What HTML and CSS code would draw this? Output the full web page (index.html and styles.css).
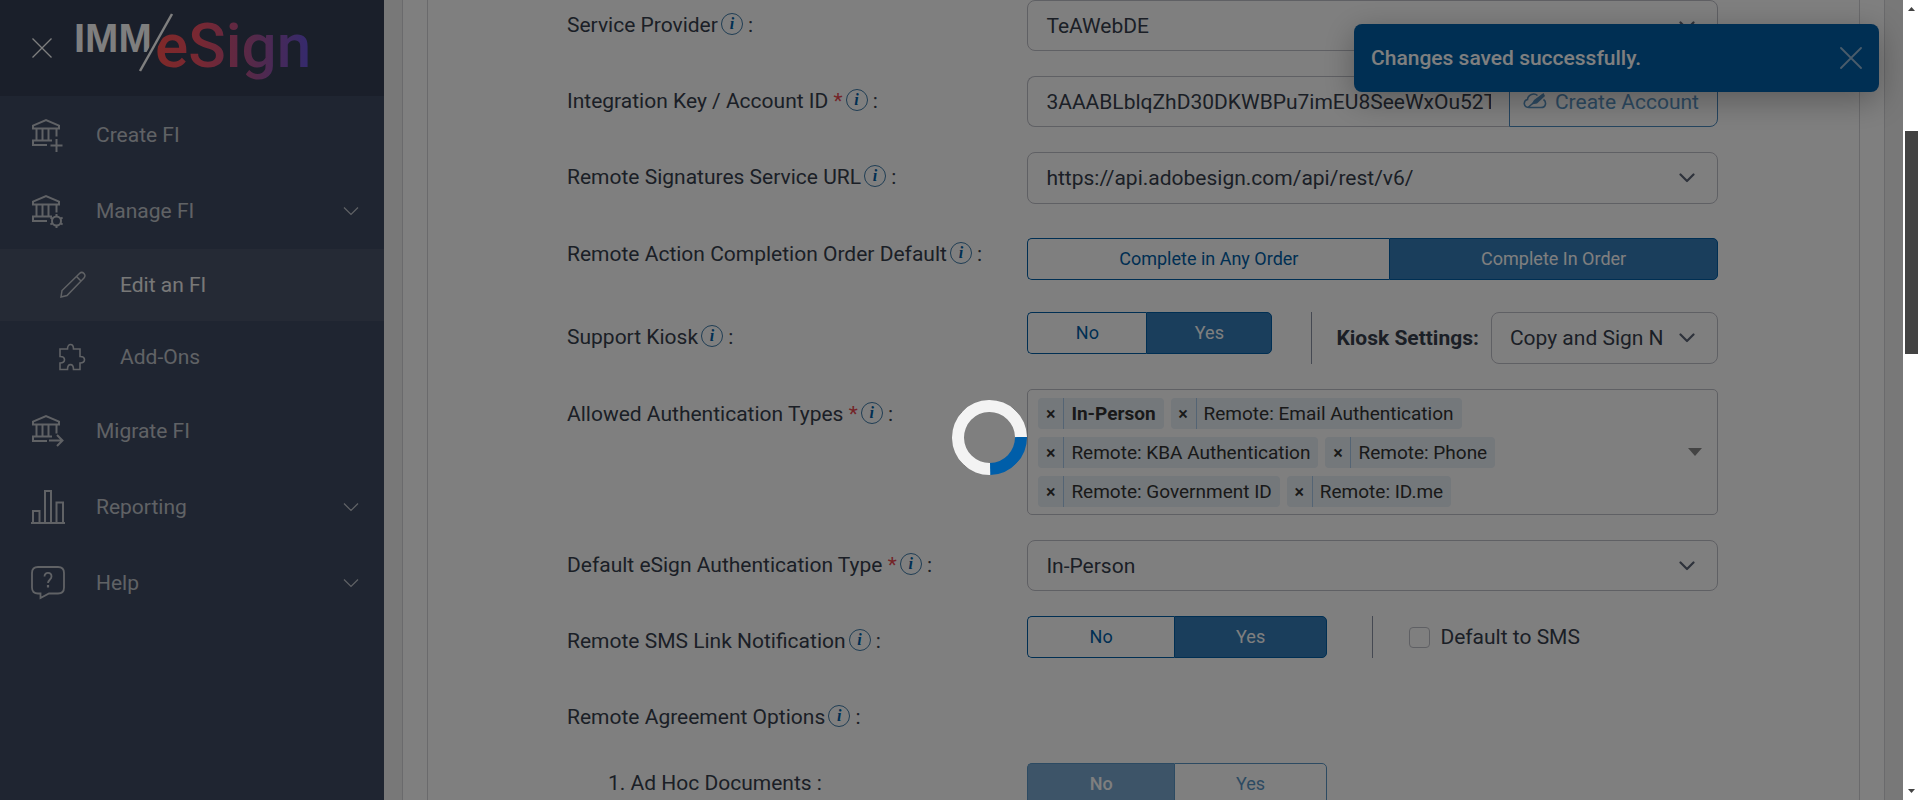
FILE: index.html
```html
<!DOCTYPE html>
<html lang="en">
<head>
<meta charset="utf-8">
<title>IMM eSign - Edit an FI</title>
<link rel="stylesheet" href="styles.css">
</head>
<body>
<svg class="sprite" aria-hidden="true">
  <symbol id="i-chev" viewBox="0 0 16 10"><path d="M1.500 1.500 8 8l6.500-6.500" fill="none" stroke="currentColor" stroke-width="2.200" stroke-linecap="round" stroke-linejoin="round"/></symbol>
  <symbol id="i-thin" viewBox="0 0 16 10"><path d="M1 1.500 8 8.500l7-7" fill="none" stroke="currentColor" stroke-width="1.200"/></symbol>
  <symbol id="i-bank" viewBox="0 0 34 34"><g fill="none" stroke="currentColor" stroke-width="2"><path d="M2 10.500V7.700L15 2l13 5.700v2.800z"/><path d="M5.500 10.500v12M11.500 10.500v12M17.500 10.500v12"/><path d="M21 22.500H2V27h14"/></g></symbol>
</svg>
<div class="app">
  <aside class="sidebar">
    <header class="brand">
      <button class="plain" type="button" aria-label="Close menu"><svg width="20" height="20" viewBox="0 0 20 20"><path d="M.5.5l19 19M19.500.5l-19 19" stroke="currentColor" stroke-width="1.300"/></svg></button>
      <svg class="logo" width="250" height="90" viewBox="-10 0 250 90" role="img" aria-label="IMM eSign">
        <defs><linearGradient id="brand" gradientUnits="userSpaceOnUse" x1="82" y1="0" x2="231" y2="0"><stop offset="0" stop-color="#ff5252"/><stop offset=".3" stop-color="#ec5068"/><stop offset=".65" stop-color="#a85294"/><stop offset="1" stop-color="#6c54d8"/></linearGradient></defs>
        <text class="logo-imm" x="-2" y="52">IMM</text>
        <text class="logo-esign" x="79" y="67" fill="url(#brand)">eSign</text>
        <path d="M96 14 64 71" stroke="#343e54" stroke-width="7"/>
        <path d="M96 14 64 71" stroke="#fff" stroke-width="2.500"/>
      </svg>
    </header>
    <nav class="menu">
      <a class="item" href="#"><svg class="ico" width="34" height="34"><use href="#i-bank"/><path d="M25.500 10.500v8M25.500 21v13M19.500 27.500h12" fill="none" stroke="currentColor" stroke-width="2"/></svg><span>Create FI</span></a>
      <a class="item" href="#"><svg class="ico" width="34" height="34"><use href="#i-bank"/><g fill="none" stroke="currentColor" stroke-width="2"><path d="M25.500 10.500v8"/><circle cx="25.500" cy="27" r="4.500"/><path d="M25.500 22.500V20M25.500 31.500V34M29.400 24.800l2.200-1.300M21.600 29.200l-2.200 1.300M29.400 29.200l2.200 1.300M21.600 24.800l-2.200-1.300"/></g></svg><span>Manage FI</span><svg class="chev" width="16" height="10"><use href="#i-thin"/></svg></a>
      <a class="item sub active" href="#"><svg class="ico" width="28" height="28" viewBox="0 0 28 28"><path d="M2 26l1-6.500L20.500 2.500c1.500-1.500 3.500-1 4.500 0s1.500 3 0 4.500L8 24.500zM17.500 5.500l4.500 4.500" fill="none" stroke="currentColor" stroke-width="1.500"/></svg><span>Edit an FI</span></a>
      <a class="item sub" href="#"><svg class="ico" width="28" height="28" viewBox="0 0 28 28"><path d="M1 6h7.500c0-6 6-6 6 0H21v7.500c6 0 6 6.500 0 6.500v6.500h-6.500c0-6.500-6-6.500-6 0H1V20c6 0 6-6.500 0-6.500z" fill="none" stroke="currentColor" stroke-width="1.600"/></svg><span>Add-Ons</span></a>
      <a class="item" href="#"><svg class="ico" width="34" height="34"><use href="#i-bank"/><path d="M25.500 10.500v9M18 26.500h13.500M26 21l5.500 5.500-5.500 5.500" fill="none" stroke="currentColor" stroke-width="2"/></svg><span>Migrate FI</span></a>
      <a class="item" href="#"><svg class="ico" width="34" height="34" viewBox="0 0 34 34"><path d="M0 33h34M2 33V21h6.500v12M14 33V1h6v32M25.500 33V12.500H32V33" fill="none" stroke="currentColor" stroke-width="2"/></svg><span>Reporting</span><svg class="chev" width="16" height="10"><use href="#i-thin"/></svg></a>
      <a class="item" href="#"><svg class="ico" width="34" height="34" viewBox="0 0 34 34"><path d="M7 1h20c4 0 6 2 6 6v14.500c0 4-2 6-6 6h-9L9.500 32v-4.500H7c-4 0-6-2-6-6V7c0-4 2-6 6-6z" fill="none" stroke="currentColor" stroke-width="1.800"/><path d="M13.500 10.500c0-5 7-4.500 7 0 0 3-3.500 3.500-3.500 6.500" fill="none" stroke="currentColor" stroke-width="1.800"/><path d="M17 19v2.500" stroke="currentColor" stroke-width="2.200"/></svg><span>Help</span><svg class="chev" width="16" height="10"><use href="#i-thin"/></svg></a>
    </nav>
  </aside>

  <main class="content">
    <div class="panel">
      <form class="form">
        <div class="row">
          <div class="label"><label for="provider">Service Provider</label><button class="info" type="button" aria-label="About service provider">i</button> :</div>
          <div class="select"><select id="provider"><option>TeAWebDE</option></select><svg width="16" height="10"><use href="#i-chev"/></svg></div>
        </div>
        <div class="row">
          <div class="label"><label for="key">Integration Key / Account ID <b class="req">*</b></label><button class="info" type="button" aria-label="About integration key">i</button> :</div>
          <div class="group">
            <input id="key" type="text" value="3AAABLblqZhD30DKWBPu7imEU8SeeWxOu52T">
            <button class="create" type="button"><svg width="24" height="18" viewBox="0 0 24 18"><path d="M20.500 6.500c3 2 3 8-2.500 8H6c-6 0-6-7-1.500-8C5 1.500 11-.5 14.500 2.500M5 14.500l15-13" fill="none" stroke="currentColor" stroke-width="1.600"/><path d="M8.500 11.500 11 7l9.500-7L22 3l-8 7.500z" fill="currentColor"/></svg>Create Account</button>
          </div>
        </div>
        <div class="row tall">
          <div class="label"><label for="url">Remote Signatures Service URL</label><button class="info" type="button" aria-label="About service URL">i</button> :</div>
          <div class="select"><select id="url"><option>https://api.adobesign.com/api/rest/v6/</option></select><svg width="16" height="10"><use href="#i-chev"/></svg></div>
        </div>
        <div class="row order">
          <div class="label">Remote Action Completion Order Default<button class="info" type="button" aria-label="About completion order">i</button> :</div>
          <div class="toggle wide" role="group" aria-label="Remote Action Completion Order Default"><button type="button">Complete in Any Order</button><button class="on" type="button">Complete In Order</button></div>
        </div>
        <div class="row tall">
          <div class="label">Support Kiosk<button class="info" type="button" aria-label="About kiosk">i</button> :</div>
          <div class="kiosk">
            <div class="toggle small" role="group" aria-label="Support Kiosk"><button type="button">No</button><button class="on" type="button">Yes</button></div>
            <div class="kiosk-set"><label for="kiosk">Kiosk Settings:</label><div class="select compact"><select id="kiosk"><option>Copy and Sign N</option></select><svg width="16" height="10"><use href="#i-chev"/></svg></div></div>
          </div>
        </div>
        <div class="row">
          <div class="label">Allowed Authentication Types <b class="req">*</b><button class="info" type="button" aria-label="About authentication types">i</button> :</div>
          <div class="multi">
            <ul class="tags">
              <li><button type="button" aria-label="Remove In-Person">×</button><b>In-Person</b></li>
              <li><button type="button" aria-label="Remove Email">×</button><span>Remote: Email Authentication</span></li>
              <li><button type="button" aria-label="Remove KBA">×</button><span>Remote: KBA Authentication</span></li>
              <li><button type="button" aria-label="Remove Phone">×</button><span>Remote: Phone</span></li>
              <li><button type="button" aria-label="Remove Government ID">×</button><span>Remote: Government ID</span></li>
              <li><button type="button" aria-label="Remove ID.me">×</button><span>Remote: ID.me</span></li>
            </ul>
            <svg width="14" height="8" viewBox="0 0 14 8"><path d="M0 0h14L7 8z" fill="#888"/></svg>
          </div>
        </div>
        <div class="row">
          <div class="label"><label for="auth">Default eSign Authentication Type <b class="req">*</b></label><button class="info" type="button" aria-label="About default type">i</button> :</div>
          <div class="select"><select id="auth"><option>In-Person</option></select><svg width="16" height="10"><use href="#i-chev"/></svg></div>
        </div>
        <div class="row">
          <div class="label">Remote SMS Link Notification<button class="info" type="button" aria-label="About SMS link">i</button> :</div>
          <div class="sms">
            <div class="toggle" role="group" aria-label="Remote SMS Link Notification"><button type="button">No</button><button class="on" type="button">Yes</button></div>
            <div class="sms-set"><input id="sms" type="checkbox"><label for="sms">Default to SMS</label></div>
          </div>
        </div>
        <div class="row last">
          <div class="label">Remote Agreement Options<button class="info" type="button" aria-label="About agreement options">i</button> :</div>
        </div>
        <div class="row">
          <div class="label nested">1. Ad Hoc Documents :</div>
          <div class="toggle" role="group" aria-label="Ad Hoc Documents"><button class="on strong" type="button" disabled>No</button><button type="button" disabled>Yes</button></div>
        </div>
      </form>
    </div>
  </main>

  <div class="toast" role="status"><span>Changes saved successfully.</span><button class="plain" type="button" aria-label="Dismiss"><svg width="22" height="22" viewBox="0 0 22 22"><path d="M1 1l20 20M21 1 1 21" stroke="currentColor" stroke-width="1.800" stroke-linecap="round"/></svg></button></div>
  <div class="overlay"><div class="spinner" role="progressbar" aria-label="Loading"></div></div>
</div>
<div class="scroll" aria-hidden="true">
  <svg width="7" height="4"><path d="M0 4h7L3.500 0z" fill="#434343"/></svg>
  <div class="track"><div class="thumb"></div></div>
  <svg width="7" height="4"><path d="M0 0h7L3.500 4z" fill="#434343"/></svg>
</div>
</body>
</html>
```
FILE: styles.css
```css
* { box-sizing: border-box; }
body {
  margin: 0;
  height: 100vh;
  overflow: hidden;
  display: flex;
  background: #fff;
  font: 21px/24px Roboto, "Liberation Sans", sans-serif;
  color: #373e4d;
}
button, input, select { font: inherit; color: inherit; margin: 0; }
button { cursor: pointer; }
svg { display: block; flex: none; }
.sprite { position: absolute; width: 0; height: 0; }
.plain { padding: 0; border: 0; background: none; }

.app { position: relative; flex: 1; display: flex; overflow: hidden; background: #f0f0f0; }

.sidebar { width: 384px; flex: none; background: #3e4a62; }
.brand { display: flex; height: 96px; padding-left: 32px; background: #343e54; color: #fff; }
.brand .plain { align-self: center; color: #fff; }
.logo { margin-left: 14px; }
.logo-imm { font: bold 40px "Liberation Sans", sans-serif; fill: #fff; }
.logo-esign { font: 500 62px Roboto, sans-serif; }
.menu { display: flex; flex-direction: column; padding-top: 1px; }
.item {
  display: flex;
  align-items: center;
  height: 76px;
  padding: 0 25px 0 31px;
  color: #c0c4cb;
  text-decoration: none;
}
.item .ico { margin-right: 31px; overflow: visible; }
.item .chev { margin-left: auto; }
.sub { height: 72px; padding-left: 59px; }
.sub .ico { margin-right: 33px; }
.active { background: #4a546a; color: #f0f0f0; }
.active .ico { color: #c0c4cb; }

.content { flex: 1; display: flex; padding: 0 18px; }
.panel {
  flex: 1;
  padding: 0 24px;
  background: #fff;
  border: solid #d4d4d8;
  border-width: 0 1px;
}
.form {
  display: flex;
  flex-direction: column;
  gap: 25px;
  min-height: 100%;
  padding: 0 141px 0 139px;
  border: solid #d4d4d8;
  border-width: 0 1px;
}
.row { display: grid; grid-template-columns: 2fr 3fr; align-items: start; min-height: 51px; }
.row.tall { min-height: 52px; }
.row.order { min-height: 58px; }
.row.last { margin-bottom: -5px; }
.label { padding-top: 13px; white-space: nowrap; }
.label.nested { padding: 8px 0 0 41px; }
.req { color: #e8484f; font-weight: 400; }
.info {
  width: 22px;
  height: 22px;
  padding: 0;
  margin: 0 0 0 3px;
  border: 1px solid #3f7ba8;
  border-radius: 50%;
  background: none;
  color: #005ea6;
  font: italic bold 16px/20px "Liberation Serif", serif;
  vertical-align: 3px;
}

.select { display: grid; align-items: center; }
.select select, .select svg { grid-area: 1 / 1; }
.select svg { justify-self: end; margin-right: 23px; color: #5c6577; pointer-events: none; }
.select select {
  appearance: none;
  width: 100%;
  height: 51px;
  padding: 0 50px 0 18px;
  border: 1px solid #bfc0c8;
  border-radius: 8px;
  background: #fff;
}
.tall .select select { height: 52px; }
.select.compact { flex: 1; }

.group { display: flex; }
.group input {
  flex: 1;
  min-width: 0;
  height: 51px;
  padding: 0 18px;
  border: 1px solid #bfc0c8;
  border-right: 0;
  border-radius: 8px 0 0 8px;
  background: #fff;
}
.create {
  display: flex;
  align-items: center;
  gap: 8px;
  height: 51px;
  padding: 0 18px 0 13px;
  border: 1px solid #4a8ac0;
  border-radius: 0 8px 8px 0;
  background: #fff;
  color: #5a95c5;
}

.toggle { display: flex; width: 300px; height: 42px; font-size: 18px; }
.toggle.wide { width: auto; margin-top: 9px; }
.toggle.small { width: 245px; }
.toggle button {
  flex: 1 1 auto;
  padding: 0;
  border: 1px solid #005ea6;
  background: #fff;
  color: #005ea6;
}
.toggle button:first-child { border-right: 0; border-radius: 5px 0 0 5px; }
.toggle button:last-child { border-radius: 0 5px 5px 0; }
.toggle .on { background: #347cb8; color: #fff; }
.toggle .strong { font-weight: 500; }
.toggle button:disabled { opacity: .65; }

.kiosk { display: flex; gap: 39px; }
.kiosk-set { flex: 1; display: flex; align-items: center; gap: 12px; padding-left: 24px; border-left: 1px solid #8a92a4; }
.kiosk-set label { font-weight: 700; }

.sms { display: flex; gap: 45px; }
.sms-set { display: flex; align-items: center; gap: 10px; padding-left: 36px; border-left: 1px solid #8a92a4; }
.sms-set input { appearance: none; width: 21px; height: 21px; border: 1px solid #bfc0c8; border-radius: 4px; background: #fff; }

.multi {
  display: flex;
  align-items: center;
  min-height: 126px;
  padding: 0 15px 0 10px;
  border: 1px solid #bfc0c8;
  border-radius: 5px;
}
.tags { flex: 1; display: flex; flex-wrap: wrap; gap: 8px 7px; margin: 0; padding: 0 150px 0 0; list-style: none; }
.tags li { display: flex; height: 31px; border-radius: 4px; background: #e8f0f6; font-size: 19px; line-height: 31px; color: #333; }
.tags li > :last-child { padding: 0 8px 0 7px; }
.tags button { width: 26px; padding: 0; border: 0; border-right: 1px solid #a8c8e8; background: none; font-size: 18px; font-weight: 500; }

.toast {
  position: absolute;
  top: 24px;
  right: 24px;
  display: flex;
  align-items: center;
  justify-content: space-between;
  width: 525px;
  height: 68px;
  padding: 0 17px;
  border-radius: 8px;
  background: #005ea6;
  box-shadow: 0 8px 32px rgba(0, 0, 0, .3);
  color: #fff;
  font-weight: 500;
}
.toast .plain { color: #94b8d6; }
.overlay { position: absolute; inset: 0; background: rgba(0, 0, 0, .5); }
.spinner {
  position: absolute;
  top: 50%;
  left: 50%;
  width: 75px;
  height: 75px;
  border: 12px solid #f3f3f3;
  border-bottom-color: #005ea9;
  border-radius: 50%;
  transform: rotate(-46deg);
}

.scroll { display: flex; flex-direction: column; align-items: center; gap: 7px; width: 17px; padding: 7px 0; }
.track { flex: 1; width: 13px; padding-top: 113px; }
.thumb { height: 223px; background: #434343; }
```
